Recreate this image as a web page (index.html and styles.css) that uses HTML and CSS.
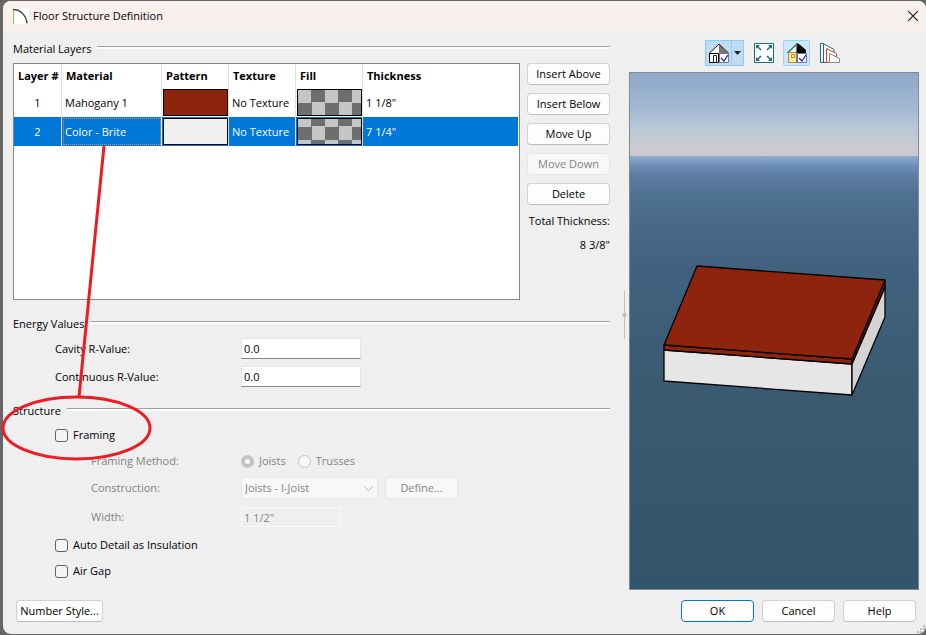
FILE: index.html
```html
<!DOCTYPE html>
<html lang="en">
<head>
<meta charset="utf-8">
<title>Floor Structure Definition</title>
<link rel="stylesheet" href="styles.css">
</head>
<body>
<main class="dialog">
  <header class="titlebar">
    <svg class="logo" width="16" height="16" viewBox="0 0 16 16" aria-hidden="true"><path fill="#fff" d="M0 0h16v16H0z"/><path d="M.500 1v15" stroke="#8fc34a" stroke-width="1.200"/><path d="M0 1.500C8 1.500 13.500 8 14 15.500" fill="none" stroke="#444" stroke-width="1.300"/></svg>
    <h1 class="title">Floor Structure Definition</h1>
    <button class="close" aria-label="Close"><svg width="10" height="10" viewBox="0 0 10 10"><path d="M0 0l10 10M10 0L0 10" stroke="#1b1b1b" stroke-width="1.200"/></svg></button>
  </header>

  <div class="content">
    <div class="settings">
      <section class="section">
        <h2 class="heading">Material Layers</h2>
        <div class="layers">
          <div class="table-box">
            <table class="table">
              <thead>
                <tr><th class="c-num">Layer #</th><th class="c-mat">Material</th><th class="c-swatch">Pattern</th><th class="c-swatch">Texture</th><th class="c-swatch">Fill</th><th>Thickness</th></tr>
              </thead>
              <tbody>
                <tr><td class="num">1</td><td>Mahogany 1</td><td class="cell"><div class="swatch mahogany"></div></td><td>No Texture</td><td class="cell"><div class="swatch checker"></div></td><td>1 1/8"</td></tr>
                <tr class="selected"><td class="num">2</td><td class="focused">Color - Brite</td><td class="cell"><div class="swatch brite"></div></td><td>No Texture</td><td class="cell"><div class="swatch checker checker-low"></div></td><td>7 1/4"</td></tr>
              </tbody>
            </table>
          </div>
          <div class="actions">
            <button class="btn">Insert Above</button>
            <button class="btn">Insert Below</button>
            <button class="btn">Move Up</button>
            <button class="btn" disabled>Move Down</button>
            <button class="btn">Delete</button>
            <span class="total">Total Thickness:</span>
            <span class="total">8 3/8"</span>
          </div>
        </div>
      </section>

      <section class="section">
        <h2 class="heading">Energy Values</h2>
        <div class="energy">
          <div class="row"><label class="label" for="cavity">Cavity R-Value:</label><input class="field" id="cavity" value="0.0"></div>
          <div class="row"><label class="label" for="continuous">Continuous R-Value:</label><input class="field" id="continuous" value="0.0"></div>
        </div>
      </section>

      <section class="section">
        <h2 class="heading">Structure</h2>
        <div class="structure">
          <div class="row line"><input class="check" type="checkbox" id="framing"><label for="framing">Framing</label></div>
          <div class="row line off"><span class="label sub">Framing Method:</span><input class="radio" type="radio" name="method" id="joists" checked disabled><label class="radio-label" for="joists">Joists</label><input class="radio" type="radio" name="method" id="trusses" disabled><label for="trusses">Trusses</label></div>
          <div class="row off"><label class="label sub" for="construction">Construction:</label><select class="select" id="construction" disabled><option>Joists - I-Joist</option></select><button class="btn define" disabled>Define...</button></div>
          <div class="row tall off"><label class="label sub" for="width">Width:</label><input class="field small" id="width" value='1 1/2"' disabled></div>
          <div class="row line"><input class="check" type="checkbox" id="auto"><label for="auto">Auto Detail as Insulation</label></div>
          <div class="row line"><input class="check" type="checkbox" id="gap"><label for="gap">Air Gap</label></div>
        </div>
      </section>
    </div>

    <div class="splitter"><svg width="5" height="48" viewBox="0 0 5 48"><path d="M2.500 0v48" stroke="#c0c0c0"/><circle cx="2.500" cy="24" r="2.200" fill="#c0c0c0"/></svg></div>

    <div class="preview-pane">
      <div class="toolbar">
        <div class="split">
          <button class="tool" aria-label="House view"><svg width="20" height="20" viewBox="0 0 20 20"><path d="M2 10L10 2v8z" fill="#fff"/><path d="M10 1l9 9h-9z" fill="#777"/><path d="M.500 10.500h9v9h-9z" fill="#fff" stroke="#000"/><path d="M4.500 19.500v-7h3v7M0 10.500L10 1l10 9.500" fill="none" stroke="#222"/><path d="M10.500 10.500h9v9h-9z" fill="#fff" stroke="#777"/><path d="M12 15l3 3 4-6" fill="none" stroke="#22b" stroke-width="1.300"/></svg></button>
          <button class="tool drop" aria-label="View options"><svg width="7" height="4" viewBox="0 0 7 4"><path d="M0 0h7L3.500 4z" fill="#222"/></svg></button>
        </div>
        <button class="tool plain" aria-label="Fill window"><svg width="20" height="20" viewBox="0 0 20 20"><path d="M.500.500h19v19H.500z" fill="#fff" stroke="#1b6a86"/><path d="M2 2h4L2 6zM18 2v4l-4-4zM2 18v-4l4 4zM18 18h-4l4-4z" fill="#1b6a86"/><path d="M3 3l4 4M17 3l-4 4M3 17l4-4M17 17l-4-4" stroke="#1b6a86" stroke-width="1.500"/></svg></button>
        <button class="tool active" aria-label="Color"><svg width="20" height="20" viewBox="0 0 20 20"><path d="M1 9.500L9.500 1.500v8z" fill="#fff" stroke="#1b6a86" stroke-width="1.200"/><path d="M9 0l3 1 7 6v3H9z"/><path d="M1.500 9.500h8v10h-8z" fill="#ffe7a5" stroke="#c98a1c"/><path d="M4.500 11.500h3v3h-3z" fill="#fff" stroke="#c98a1c"/><path d="M9.500 0v20" stroke="#777"/><path d="M10.500 10.500h9v9h-9z" fill="#fff" stroke="#777"/><path d="M12 15l3 3 4-6" fill="none" stroke="#22b" stroke-width="1.300"/></svg></button>
        <button class="tool plain" aria-label="Layers"><svg width="20" height="20" viewBox="0 0 20 20"><path d="M.500 19.500V.500H3l11 6v13z" fill="#fff" stroke="#1b6a86"/><path d="M3.500 1v18.500" stroke="#1b6a86"/><path d="M6.500 19.500v-14l10 5v9z" fill="#fff" stroke="#d9402f"/><path d="M9.500 19.500v-9l10 5v4z" fill="#fff" stroke="#888"/></svg></button>
      </div>
      <div class="preview">
        <svg class="slab" viewBox="0 0 288 516" preserveAspectRatio="xMidYMid meet">
          <g stroke="#000" stroke-width="1.300" stroke-linejoin="round">
            <path d="M34 277l188 14v31L34 308z" fill="#e6e6e6"/>
            <path d="M222 291l33-77v30l-33 78z" fill="#d4d4d4"/>
            <path d="M34 272l188 14v5L34 277z" fill="#8f240e"/>
            <path d="M222 286l33-79v7l-33 77z" fill="#6e1a08"/>
            <path d="M67 193l188 14-33 79-188-14z" fill="#8f240e"/>
          </g>
        </svg>
      </div>
    </div>
  </div>

  <footer class="footer">
    <button class="btn style-btn">Number Style...</button>
    <div class="confirm">
      <button class="btn wide primary">OK</button>
      <button class="btn wide">Cancel</button>
      <button class="btn wide">Help</button>
    </div>
  </footer>
  <svg class="grip" width="8" height="8" viewBox="0 0 8 8" aria-hidden="true"><path d="M6 0h2v2H6zM3 3h2v2H3zM6 3h2v2H6zM0 6h2v2H0zM3 6h2v2H3zM6 6h2v2H6z" fill="#bbb"/></svg>
</main>
<svg class="markup" width="160" height="470" viewBox="0 0 160 470" aria-hidden="true"><g fill="none" stroke="#ed1c24" stroke-width="3"><path d="M104 146L79 397"/><ellipse cx="76.500" cy="428" rx="73.500" ry="31"/></g></svg>
</body>
</html>
```
FILE: styles.css
```css
* { box-sizing: border-box; }
body {
  margin: 0;
  min-height: 100vh;
  padding: 1px 0 1px 3px;
  display: flex;
  background: #666;
  color: #000;
  font: 11px/16px "Open Sans", sans-serif;
}
button, input, select { font: inherit; color: inherit; margin: 0; }
h1, h2 { margin: 0; font-size: inherit; font-weight: 400; }

.dialog {
  position: relative;
  flex: 1;
  min-width: 0;
  display: flex;
  flex-direction: column;
  background: #efefef;
  border-radius: 8px;
  overflow: hidden;
}
.titlebar {
  display: flex;
  align-items: center;
  gap: 4px;
  height: 30px;
  padding: 0 8px 0 10px;
  background: #f9f0ee;
}
.title { flex: 1; }
.close { display: flex; padding: 0; border: 0; background: none; }

.content {
  flex: 1;
  display: grid;
  grid-template-columns: minmax(0, 597fr) 19px minmax(0, 290fr);
  padding: 9px 7px 0 10px;
}
.settings { display: flex; flex-direction: column; gap: 16px; padding-top: 1px; }
.section { display: flex; flex-direction: column; gap: 6px; }
.heading { display: flex; gap: 6px; }
.heading::after {
  content: "";
  flex: 1;
  height: 2px;
  margin-top: 5px;
  background: #fff;
  border-top: 1px solid #a0a0a0;
}

.layers { display: grid; grid-template-columns: minmax(0, 1fr) 83px; gap: 7px; }
.table-box { height: 237px; background: #fff; border: 1px solid #828790; padding-right: 1px; }
.table { width: 100%; table-layout: fixed; border-collapse: separate; border-spacing: 0; }
.table th { height: 24px; padding: 0 4px; text-align: left; font-weight: 700; white-space: nowrap; }
.table td { height: 29px; padding: 0 3px; white-space: nowrap; }
.table th, .table td { border-right: 1px solid #e0e0e0; }
.table th:last-child, .table td:last-child { border-right: 0; }
.c-num { width: 48px; }
.c-mat { width: 100px; }
.c-swatch { width: 67px; }
.table .num { text-align: center; }
.table .cell { padding: 0 0 0 1px; }
.table .selected td { background: #0078d7; color: #fff; }
.table .focused { outline: 1px dotted #ff8728; outline-offset: -2px; }
.swatch { height: 27px; border: 1px solid #000; }
.mahogany { background: #8f240e; }
.brite { background: #efefef; }
.checker { background: conic-gradient(#6e6e6e 25%, #c4c5c7 0 50%, #6e6e6e 0 75%, #c4c5c7 0) 0 -1px / 27px 27px; }
.checker-low { background-position: 0 -6px; }

.actions { display: flex; flex-direction: column; gap: 8px; }
.total { text-align: right; white-space: nowrap; }
.btn {
  height: 22px;
  padding: 0 2px;
  background: #fdfdfd;
  border: 1px solid #d0d0d0;
  border-bottom-color: #bcbcbc;
  border-radius: 4px;
  white-space: nowrap;
}
.btn:disabled { color: #838383; background: #f8f8f8; border-color: #e6e6e6; }
.primary { border-color: #0078d4; }

.energy { display: flex; flex-direction: column; gap: 7px; padding-left: 42px; }
.structure { display: flex; flex-direction: column; gap: 6px; padding-left: 42px; }
.row { display: flex; align-items: center; }
.line { height: 20px; }
.tall { height: 24px; }
.off { color: #838383; }
.label { width: 186px; }
.sub { padding-left: 36px; }
.field {
  width: 120px;
  height: 21px;
  padding: 0 2px;
  background: #fff;
  border: 1px solid #e6e6e6;
  border-bottom-color: #868686;
}
.small { width: 100px; height: 20px; background: #efefef; border: 1px solid #fafafa; }
.check, .radio { appearance: none; width: 13px; height: 13px; margin-right: 5px; border: 1px solid #626262; border-radius: 3px; background: #f5f5f5; }
.radio { border-color: #c3c3c3; border-radius: 50%; background: #f8f8f8; }
.radio:checked { border: 4px solid #c3c3c3; }
.radio-label { margin-right: 12px; }
.select {
  appearance: none;
  width: 137px;
  height: 22px;
  margin-right: 7px;
  padding: 0 3px;
  border: 1px solid #e6e6e6;
  background: #f8f8f8 url("data:image/svg+xml,%3Csvg xmlns='http://www.w3.org/2000/svg' width='9' height='5'%3E%3Cpath d='M.5.5l4 4 4-4' fill='none' stroke='%23aaa'/%3E%3C/svg%3E") no-repeat right 4px center;
  opacity: 1;
}
.define { width: 73px; }

.splitter { display: flex; justify-content: flex-end; align-items: center; padding-right: 2px; }
.preview-pane { display: flex; flex-direction: column; gap: 6px; }
.toolbar { display: flex; justify-content: center; gap: 6px; height: 26px; }
.split { display: flex; }
.tool { display: flex; align-items: center; justify-content: center; width: 27px; padding: 0; border: 1px solid #90c8f6; background: #c0dcf3; }
.drop { width: 13px; margin-left: -1px; }
.active { background: #cce8ff; border-color: #99d1ff; border-radius: 2px; }
.plain { border-color: transparent; background: none; }
.preview {
  flex: 1;
  display: flex;
  border: 1px solid #828790;
  background: linear-gradient(#8fa9cb, #a3b8d3 7%, #bac9d6 11%, #c9cad2 14%, #cbcad0 16%, #8fb0d0 16%, #6c8db5 18%, #5c7ca3 20%, #517393 23%, #486987 29%, #41627f 38%, #39596f 65%, #33556b);
}
.slab { flex: 1; min-width: 0; }

.footer { display: flex; justify-content: space-between; padding: 10px 10px 12px 13px; }
.style-btn { width: 87px; }
.confirm { display: flex; gap: 8px; }
.wide { width: 73px; }
.grip { position: absolute; right: 1px; bottom: 1px; }
.markup { position: absolute; left: 0; top: 0; pointer-events: none; }
```
